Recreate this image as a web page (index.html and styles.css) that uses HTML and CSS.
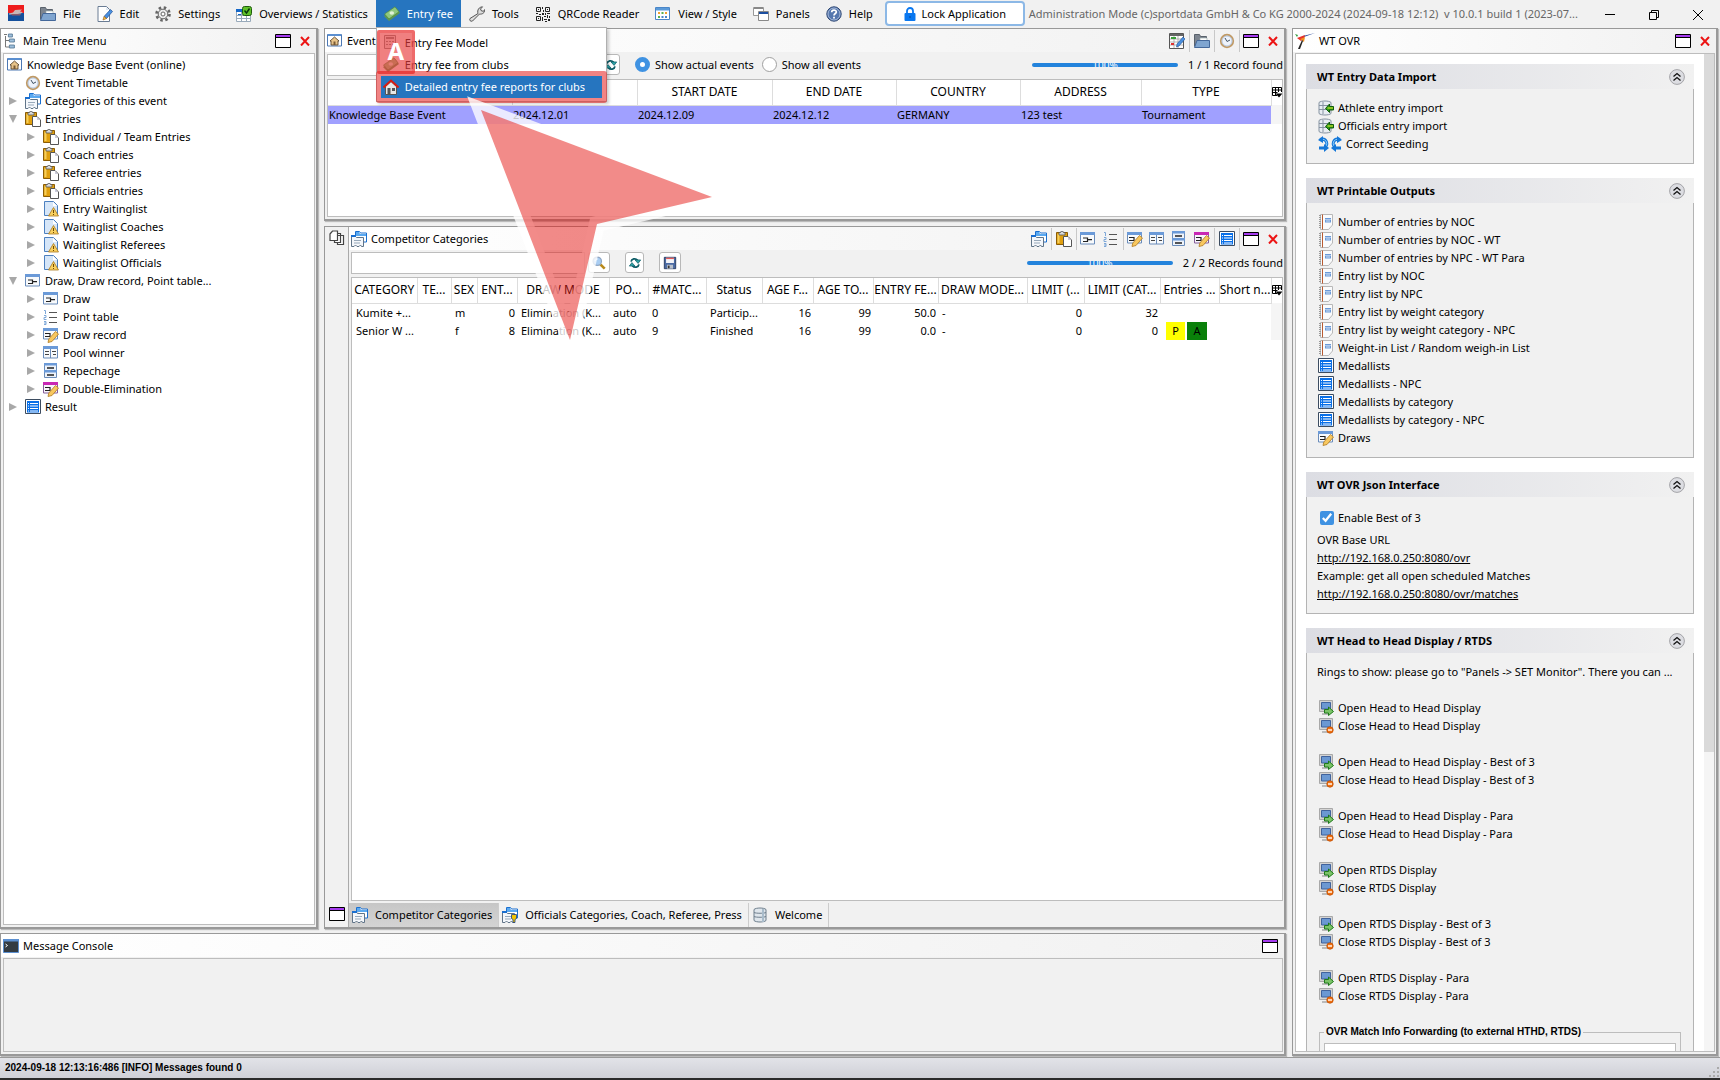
FILE: index.html
```html
<!DOCTYPE html>
<html lang="en">
<head>
  <meta charset="UTF-8">
  <meta name="viewport" content="width=device-width, initial-scale=1.0">
  <title>Sportdata</title>
  <link rel="stylesheet" href="styles.css">
</head>
<body>
  <!-- icon sprite -->
  <svg class="sprite" aria-hidden="true">
    <symbol id="logo" viewBox="0 0 16 16"><path fill="#ee1c1c" d="M0 0h16v8H0z"/><path fill="#14509c" d="M0 8h16v8H0z"/><path fill="#c9b6b6" d="M1 8.500l4-1 2-2.500 7-.5-2 2 3 .5-2 1.500-7 1H1z"/><path fill="#8b5a6a" d="M3 9h10l-1 1.500H4z"/></symbol>
    <symbol id="folder" viewBox="0 0 16 16"><path fill="#7d8590" stroke="#5a626c" d="M.5 13.500V1.500h5l1 2h6v3"/><path fill="#fff" stroke="#9aa" stroke-width=".6" d="M6 5h7v4H6z"/><path fill="#7fa5d0" stroke="#44689a" d="M3 7.500h12.500v7H.5z"/></symbol>
    <symbol id="edit" viewBox="0 0 16 16"><path fill="#fff" stroke="#6a7c94" d="M1 .5h8.500l3 3v12H1z"/><path fill="#dfe9f5" d="M9 1v3h3z"/><path fill="#4a90e0" stroke="#1c4f96" stroke-width=".7" d="M13.500 3.500l2 2-6 7-2.500-2z"/><path fill="#f7c948" stroke="#a8641a" stroke-width=".7" d="M7 10.500l2.500 2L6 14z"/></symbol>
    <symbol id="gear" viewBox="0 0 16 16"><circle cx="8" cy="8" r="6.500" fill="none" stroke="#666" stroke-width="2.600" stroke-dasharray="2.500 2.600"/><circle cx="8" cy="8" r="4.800" fill="#ececec" stroke="#666"/><circle cx="8" cy="8" r="2" fill="#fff" stroke="#666"/></symbol>
    <symbol id="overview" viewBox="0 0 16 16"><path fill="#fff" stroke="#9ab" d="M.5 3.500h14v12H.5z"/><path fill="#1668c8" d="M0 3h8v3H0zM2 8h3v1H2zM2 12h3v1H2z"/><path stroke="#9ab" fill="none" d="M.5 9.500h14M.5 12.500h14M5.500 6v9M10.500 6v9"/><rect x="6.500" y=".5" width="9" height="9" rx="2" fill="#5fc02a" stroke="#1e5c0c"/><path stroke="#06350a" fill="none" stroke-width="1.400" d="M8.500 4.500l2 2.500 3-4.500"/></symbol>
    <symbol id="money" viewBox="0 0 16 16"><path fill="#5e9a4f" d="M0 10L12 2l4 5-11 8z"/><path fill="#8fc97f" stroke="#4d8541" stroke-width=".7" d="M.5 8L11 .8l4 5L5 13z"/><ellipse cx="7.800" cy="7" rx="2.300" ry="1.800" fill="#dff2d8"/></symbol>
    <symbol id="wrench" viewBox="0 0 16 16"><path fill="#ddd" stroke="#555" d="M9 7.500C8 4 10 1 13.500.8L11.500 3l1 2 2.200.2L15.800 3.500C16 7 13 8.500 10.500 8L3.500 15c-2 1-3.500-1-2.500-2.500z"/></symbol>
    <symbol id="qr" viewBox="0 0 16 16"><path fill="none" stroke="#222" d="M1.500 1.500h4v4h-4zM10.500 1.500h4v4h-4zM1.500 10.500h4v4h-4z"/><path fill="#222" d="M3 3h1v1H3zM12 3h1v1h-1zM3 12h1v1H3zM7 1h1v2H7zM8 4h1v2H8zM1 7h2v1H1zM4 8h2v1H4zM7 7h2v2H7zM10 7h1v2h-1zM12 7h3v1h-3zM9 10h2v1H9zM12 9h1v3h-1zM14 10h1v2h-1zM7 11h1v4H7zM9 13h3v1H9zM13 13h2v2h-2zM10 15h2v1h-2z"/></symbol>
    <symbol id="view" viewBox="0 0 16 16"><path fill="#fff" stroke="#4a86c8" d="M.5 1.500h14v12H.5z"/><path fill="#5b9ad8" d="M1 2h13v2.500H1z"/><path fill="#f0a030" d="M3 6h2v2H3zM10 6h2v2h-2z"/><path fill="#58b04c" d="M6.500 6h2v2h-2zM3 10h2v2H3z"/><path fill="#4a86c8" d="M6.500 10h2v2h-2zM10 10h2v2h-2z"/></symbol>
    <symbol id="panels" viewBox="0 0 16 16"><path fill="#fff" stroke="#999" d="M.5 1.500h10v8H.5z"/><path fill="#888" d="M1 1h9v2H1z"/><path fill="#fff" stroke="#888" d="M5.500 5.500h10v9h-10z"/><path fill="#1c4fa0" d="M6 6h9v2H6z"/></symbol>
    <symbol id="help" viewBox="0 0 16 16"><circle cx="8" cy="8" r="7.200" fill="#5577ae" stroke="#2d4672"/><circle cx="8" cy="8" r="6" fill="none" stroke="#b9c8e2" stroke-width=".8"/><path fill="none" stroke="#fff" stroke-width="1.700" d="M5.700 6.300c0-3 4.800-2.800 4.600-.2C10.200 7.500 8 7.600 8 9.500"/><path fill="#fff" d="M7.100 10.700h1.800v1.800H7.100z"/></symbol>
    <symbol id="lock" viewBox="0 0 12 14"><path fill="none" stroke="#0a78f0" stroke-width="1.800" d="M3 7V4a3 3 0 0 1 6 0v3"/><rect x=".5" y="6" width="11" height="8" rx="1" fill="#0a78f0"/><path fill="#054a9c" d="M5.500 9h1v2h-1z"/></symbol>
    <symbol id="tree" viewBox="0 0 16 16"><path fill="none" stroke="#777" d="M2.500 3v11H6M2.500 7.500H6M1 1.500h3"/><path fill="#9fc0dc" stroke="#4f728f" stroke-width=".8" d="M5.400 1h4v3h-4zM6.400 6h5v3h-5zM6.400 12h5v3h-5z"/></symbol>
    <symbol id="event" viewBox="0 0 16 16"><path fill="#fff" stroke="#4c78b4" d="M.5 1.500h14v11.500H.5z"/><path fill="#5b8fd0" d="M1 1h13v2H1z"/><path fill="#e8c48a" stroke="#5a4630" stroke-width=".9" d="M3 8l4.500-4L12 8h-1v4H4V8z"/><path fill="#7a5a34" d="M6.500 8.500h2V12h-2z"/></symbol>
    <symbol id="clock" viewBox="0 0 16 16"><circle cx="8" cy="8" r="6.300" fill="#eef3fb" stroke="#c09a66" stroke-width="1.700"/><circle cx="8" cy="8" r="5" fill="none" stroke="#8fa8c8" stroke-width=".6"/><path fill="none" stroke="#456" d="M6 5l2 3.500 3-1.500"/></symbol>
    <symbol id="cats" viewBox="0 0 16 16"><path fill="#fff" stroke="#1a6fd0" d="M4.500 4V.5h4l1 1.500h6v9H13"/><path fill="#5aa9f0" d="M5 1h3l1 2h6v2H5z"/><path fill="#f4f7fb" stroke="#607488" d="M.5 15.500v-10h4l1 1h7v9h-2l-1-1.500-1.500 1.500h-2l-1.500-1.500-1.500 1.500z"/><path fill="#1a6fd0" d="M0 4h5v2H0z"/><path stroke="#9ab" d="M3 9.500h7M3 12h6"/></symbol>
    <symbol id="catstar" viewBox="0 0 16 16"><use href="#cats"/><path fill="#f2c400" stroke="#1a3c7c" stroke-width=".8" d="M9.500 7.500h5v4l-1.500 1v3h-2v-3l-1.500-1z"/></symbol>
    <symbol id="paste" viewBox="0 0 16 16"><path fill="#e0a010" stroke="#8a5c06" d="M.5 1.500h11v12H.5z"/><path fill="#f6cf5c" d="M1.500 3h2v9h-2z"/><path fill="#d8d8d8" stroke="#555" stroke-width=".8" d="M3 1.500h1.500L5 .3h2l.5 1.200H9V4H3z"/><path fill="#fff" stroke="#555" d="M7.500 5.500H12l3.500 3.500v6.500h-8z"/><path fill="#ccd" d="M12 6v3h3z"/></symbol>
    <symbol id="wait" viewBox="0 0 16 16"><path fill="#d6e6f8" stroke="#4c80c0" d="M1.500.5h9l4 4v10h-13z"/><path fill="#fff" d="M10 1v4h4z"/><path fill="#f8d060" stroke="#a87820" stroke-width=".8" d="M10.500 6.500l5 8.500h-10z"/><path fill="#704a00" d="M10 9h1v3h-1zM10 13h1v1h-1z"/></symbol>
    <symbol id="draw" viewBox="0 0 16 16"><path fill="#f8fafc" stroke="#6a8cba" d="M.5 1.500h14v11.500H.5z"/><path fill="#6b9ad8" d="M0 1h15v3H0z"/><path fill="none" stroke="#222" stroke-width="1.200" d="M3 7h4.500v3.500H3M8 8.700h4"/></symbol>
    <symbol id="points" viewBox="0 0 16 16"><path fill="none" stroke="#555" stroke-width="1.200" d="M6 3.500h8M6 8.500h8M6 13.500h8"/><path fill="none" stroke="#7fa8d8" d="M1 1.500h1.500V5M1 6.500h2v2H1v2h2.500M1 12.500h2v3H1M1 14h2"/></symbol>
    <symbol id="record" viewBox="0 0 16 16"><path fill="#f8fafc" stroke="#6a8cba" d="M.5 1.500h14v10.500H.5z"/><path fill="#6b9ad8" d="M0 1h15v3H0z"/><path fill="none" stroke="#222" stroke-width="1.200" d="M2 6.500h5v3H2"/><path fill="#f8c860" stroke="#b07a20" stroke-width=".8" d="M12.500 4.500l3 2.500-6.500 7.500-4 1 .8-3.500z"/></symbol>
    <symbol id="pool" viewBox="0 0 16 16"><path fill="#f8fafc" stroke="#6a8cba" d="M.5 1.500h14v11.500H.5zM7.500 3v10"/><path fill="#6b9ad8" d="M0 1h15v3H0z"/><path stroke="#444" d="M2 6.500h4M2 9.500h4M9 6.500h4M10 9.500h3"/></symbol>
    <symbol id="rep" viewBox="0 0 16 16"><path fill="#eef3fa" stroke="#6a8cba" d="M1.500.5h12v14h-12z"/><path fill="#6b9ad8" d="M1 0h13v2.500H1zM1 7h13v2.500H1z"/><path stroke="#222" stroke-width="1.500" d="M4 5h7M4 12h7"/></symbol>
    <symbol id="double" viewBox="0 0 16 16"><path fill="#f8f4fb" stroke="#86609c" d="M.5 1.500h14v10.500H.5z"/><path fill="#c828b4" d="M0 1h15v3H0z"/><path fill="none" stroke="#222" stroke-width="1.200" d="M2 6.500h5v3H2"/><path fill="#f8c860" stroke="#b07a20" stroke-width=".8" d="M12.500 4.500l3 2.500-6.500 7.500-4 1 .8-3.500z"/></symbol>
    <symbol id="list" viewBox="0 0 16 16"><path fill="#fff" stroke="#3c4c60" d="M.5.5h15v14H.5z"/><path fill="#0a70e8" d="M2 2h12v11.500H2z"/><path stroke="#fff" d="M5 4.500h8M5 7h8M5 9.500h8M5 12h8M3 4.500h1M3 7h1M3 9.500h1M3 12h1"/></symbol>
    <symbol id="window" viewBox="0 0 16 14"><path fill="#fff" stroke="#000" d="M.5.5h15v13H.5z"/><path fill="#a63cf0" d="M1 1h14v2H1z"/><path stroke="#000" d="M1 3.500h14"/></symbol>
    <symbol id="close" viewBox="0 0 10 10"><path fill="none" stroke="#ec1414" stroke-width="2" d="M1 1l8 8.500M9 1L1 9.500"/></symbol>
    <symbol id="planner" viewBox="0 0 16 16"><path fill="#fff" stroke="#555" d="M.5.5h14v15H.5z"/><path fill="#666" d="M1 1h13v2H1z"/><path stroke="#999" stroke-width=".7" fill="none" d="M1 6h13M1 9h13M1 12h13M5 3v12M9 3v12"/><path fill="#3aa03a" d="M2 4h5v2H2z"/><path fill="#e03030" d="M2 10h3v2H2z"/><path fill="#4a90e0" stroke="#1c4f96" stroke-width=".6" d="M14 4l2 2-6 7-2.500 1 .5-3z"/></symbol>
    <symbol id="refresh" viewBox="0 0 16 16"><path fill="none" stroke="#0d5c66" stroke-width="2" d="M3.500 6.500C4 3 8.500 2 11 5M12.500 9.500C12 13 7.500 14 5 11"/><path fill="#2fa4a8" stroke="#0d5c66" stroke-width=".8" d="M14.500 4.500l-3 4-3.500-4zM1.500 11.500l3-4 3.500 4z"/></symbol>
    <symbol id="search" viewBox="0 0 16 16"><path stroke="#b98a1c" stroke-width="3" d="M9.500 9.500l5 5"/><circle cx="6" cy="6" r="4.800" fill="#a9cdf2" stroke="#8fa6c4" stroke-width="1.400"/><path fill="none" stroke="#fff" d="M3.500 5.500C4 4 5 3.500 6.500 3.500"/></symbol>
    <symbol id="save" viewBox="0 0 16 16"><path fill="#4a6aa4" stroke="#22365c" d="M1.500 1.500h13v13h-13z"/><path fill="#f4f4f8" d="M3.500 2h9v6h-9z"/><path fill="#e05a5a" d="M3.500 2h9v1.500h-9z"/><path fill="#b8c0cc" d="M4.500 10h7v4.500h-7z"/><path fill="#333" d="M5.500 11h2v3h-2z"/></symbol>
    <symbol id="columns" viewBox="0 0 11 11"><path fill="none" stroke="#000" d="M5 8.500H.5v-8h9V5M.5 3h9M.5 5.500h5M3.500.5v8M6.500.5V5"/><path d="M3.500 6.500h7L7 10.500z"/></symbol>
    <symbol id="import" viewBox="0 0 16 16"><path fill="#e8edf2" stroke="#8592a0" d="M1 2.500C3 .5 11 .5 13 2.500v11c-2 2-10 2-12 0z"/><path fill="none" stroke="#8592a0" d="M1 5.500h9M1 9.500h9M5 2v12"/><path fill="#2f9a18" stroke="#0f5c0a" d="M15.500 6.500h-4V4L7.500 8.500l4 4v-2.500h4z"/><path stroke="#e8ee30" d="M9.500 8h5.500"/></symbol>
    <symbol id="seeding" viewBox="0 0 24 16"><path fill="none" stroke="#1577d8" stroke-width="3" d="M2 3.500c7-2 9 6 4 8.500H1M22 3.500c-7-2-9 6-4 8.500h5"/><path fill="none" stroke="#8ed0ff" d="M2 3.500c7-2 9 6 4 8.500M22 3.500c-7-2-9 6-4 8.500"/><path fill="#1577d8" d="M0 4L5 0v7zM24 4l-5-4v7zM6 8v8l5-4zM18 8v8l-5-4z"/></symbol>
    <symbol id="note" viewBox="0 0 16 16"><path fill="#fafbfc" stroke="#b8b8b8" d="M2.500.5h12v10.500l-4 4.500h-8z"/><path stroke="#b85a30" d="M4.500.5v15"/><path stroke="#999" stroke-dasharray="1 1" stroke-width="2" d="M2 1v14"/><path fill="#6b9ad8" d="M7 4h6v1H7zM7 5.500h6v3H7z"/><path fill="#cfe0f4" d="M8 6.500h4v1H8z"/></symbol>
    <symbol id="monopen" viewBox="0 0 16 16"><path fill="#d4d4d4" stroke="#a8a8a8" d="M1.500.5h13v11h-13z"/><path fill="#6b98d2" stroke="#41639c" d="M3.500 2.500h9v6.500h-9z"/><path fill="#bbb" d="M4 13h6v2H4z"/><path fill="#7cc468" stroke="#1e7a1a" d="M6.500 9.500h4v-2.500l5 4.500-5 4V13h-4z"/></symbol>
    <symbol id="monclose" viewBox="0 0 16 16"><path fill="#d4d4d4" stroke="#a8a8a8" d="M1.500.5h13v11h-13z"/><path fill="#6b98d2" stroke="#41639c" d="M3.500 2.500h9v6.500h-9z"/><path fill="#bbb" d="M4 13h6v2H4z"/><circle cx="12" cy="12" r="3.200" fill="#f07010" stroke="#c04c00" stroke-width=".8"/><path fill="#fff" d="M10 11.300h4v1.400h-4z"/></symbol>
    <symbol id="wt" viewBox="0 0 20 16"><path fill="#2a4a9c" d="M20 0L8 3 6 5z"/><path fill="#e8302a" d="M2 5l8-3-1 3-3 3z"/><path fill="#f09020" d="M5 6l5-2-1 5z"/><path fill="#2f9a3c" d="M0 1l3 1-1 2z"/><path fill="#222" d="M8 8l-3 8-2 0 4-9z"/></symbol>
    <symbol id="console" viewBox="0 0 16 14"><path fill="#333b42" stroke="#5b8fd0" d="M.5.5h15v13H.5z"/><path fill="#5b8fd0" d="M0 0h16v2.500H0z"/><path fill="none" stroke="#fff" d="M2.500 5l2 1.500-2 1.500"/></symbol>
    <symbol id="pages" viewBox="0 0 16 16"><path fill="#fff" stroke="#444" stroke-width="1.200" d="M9 5.500h5.500v9H8.500V13M6 3.500h5.500v9H5.500V11"/><path fill="#fff" stroke="#444" stroke-width="1.200" d="M1 4l2.500-3h5v9.500H1z"/></symbol>
    <symbol id="db" viewBox="0 0 16 16"><path fill="#dfe6ec" stroke="#6e7e8c" d="M2 2.500C4 .5 12 .5 14 2.500v11c-2 2-10 2-12 0z"/><path fill="none" stroke="#6e7e8c" d="M2 5.500c2 1 10 1 12 0M2 9.500c2 1 10 1 12 0"/><path fill="#a9bccb" d="M10 2h2v13h-2z"/></symbol>
    <symbol id="calc" viewBox="0 0 16 16"><path fill="#eee" stroke="#888" d="M1.500.5h11v13h-11z"/><path fill="#888" d="M3 2h8v2H3zM3 6h2v1H3zM6 6h2v1H6zM9 6h2v1H9zM3 9h2v1H3zM6 9h2v1H6zM9 9h2v1H9z"/></symbol>
    <symbol id="house" viewBox="0 0 16 16"><path fill="#e8e8e8" stroke="#555" d="M2.500 7.500L8 2.500l5.500 5v8h-11z"/><path fill="#555" d="M4.500 9h3v6h-3zM9 9h3v3H9z"/><path fill="none" stroke="#d81c10" stroke-width="2" d="M.5 8.500L8 1.500l7.500 7"/></symbol>
    <symbol id="chevrons" viewBox="0 0 16 16"><circle cx="8" cy="8" r="7.400" fill="#dcdde2" stroke="#a4a4a8"/><path fill="none" stroke="#111" stroke-width="1.300" d="M4.500 7.500L8 4.500l3.500 3M4.500 11.500L8 8.500l3.500 3"/></symbol>
    <symbol id="right" viewBox="0 0 8 8"><path fill="#a8a8a8" d="M0 0l8 4-8 4z"/></symbol>
    <symbol id="down" viewBox="0 0 8 8"><path fill="#a8a8a8" d="M0 0h8L4 8z"/></symbol>
  </svg>

  <header class="menubar">
    <svg class="icon app-logo"><use href="#logo"/></svg>
    <nav class="menu">
      <button class="menu-item"><svg class="icon"><use href="#folder"/></svg>File</button>
      <button class="menu-item"><svg class="icon"><use href="#edit"/></svg>Edit</button>
      <button class="menu-item"><svg class="icon"><use href="#gear"/></svg>Settings</button>
      <button class="menu-item"><svg class="icon"><use href="#overview"/></svg>Overviews / Statistics</button>
      <div class="menu-open">
        <button class="menu-item active"><svg class="icon"><use href="#money"/></svg>Entry fee</button>
        <div class="dropdown">
          <button class="drop-item"><svg class="icon"><use href="#calc"/></svg>Entry Fee Model</button>
          <button class="drop-item"><svg class="icon"><use href="#money"/></svg>Entry fee from clubs</button>
          <button class="drop-item selected"><svg class="icon"><use href="#house"/></svg>Detailed entry fee reports for clubs</button>
          <div class="mark-letter">A</div>
          <div class="mark-frame"></div>
          <svg class="mark-arrow" viewBox="0 0 260 270"><path d="M13 19L244 106 129 133 102 249z"/></svg>
        </div>
      </div>
      <button class="menu-item"><svg class="icon"><use href="#wrench"/></svg>Tools</button>
      <button class="menu-item"><svg class="icon"><use href="#qr"/></svg>QRCode Reader</button>
      <button class="menu-item"><svg class="icon"><use href="#view"/></svg>View / Style</button>
      <button class="menu-item"><svg class="icon"><use href="#panels"/></svg>Panels</button>
      <button class="menu-item"><svg class="icon"><use href="#help"/></svg>Help</button>
    </nav>
    <button class="lock-btn"><svg class="icon-lock"><use href="#lock"/></svg>Lock Application</button>
    <span class="app-title">Administration Mode (c)sportdata GmbH &amp; Co KG 2000-2024 (2024-09-18 12:12)&nbsp; v 10.0.1 build 1 (2023-07...</span>
    <div class="window-controls">
      <button aria-label="Minimize"><svg viewBox="0 0 12 12"><path d="M1 5.500h10"/></svg></button>
      <button aria-label="Restore"><svg viewBox="0 0 12 12"><path d="M1.500 3.500h7v7h-7zM3.500 3.500v-2h7v7h-2"/></svg></button>
      <button aria-label="Close"><svg viewBox="0 0 12 12"><path d="M1 1l10 10M11 1L1 11"/></svg></button>
    </div>
  </header>

  <main class="workspace">
    <section class="panel tree-panel">
      <div class="panel-header">
        <svg class="icon"><use href="#tree"/></svg><h2>Main Tree Menu</h2>
        <div class="tools">
          <button aria-label="Maximize"><svg class="icon-window"><use href="#window"/></svg></button>
          <button aria-label="Close"><svg class="icon-close"><use href="#close"/></svg></button>
        </div>
      </div>
      <div class="panel-box">
        <ul class="tree">
          <li class="root"><svg class="icon"><use href="#event"/></svg>Knowledge Base Event (online)</li>
          <li><i class="arrow"></i><svg class="icon"><use href="#clock"/></svg>Event Timetable</li>
          <li><svg class="arrow"><use href="#right"/></svg><svg class="icon"><use href="#cats"/></svg>Categories of this event</li>
          <li><svg class="arrow"><use href="#down"/></svg><svg class="icon"><use href="#paste"/></svg>Entries</li>
          <li class="sub"><svg class="arrow"><use href="#right"/></svg><svg class="icon"><use href="#paste"/></svg>Individual / Team Entries</li>
          <li class="sub"><svg class="arrow"><use href="#right"/></svg><svg class="icon"><use href="#paste"/></svg>Coach entries</li>
          <li class="sub"><svg class="arrow"><use href="#right"/></svg><svg class="icon"><use href="#paste"/></svg>Referee entries</li>
          <li class="sub"><svg class="arrow"><use href="#right"/></svg><svg class="icon"><use href="#paste"/></svg>Officials entries</li>
          <li class="sub"><svg class="arrow"><use href="#right"/></svg><svg class="icon"><use href="#wait"/></svg>Entry Waitinglist</li>
          <li class="sub"><svg class="arrow"><use href="#right"/></svg><svg class="icon"><use href="#wait"/></svg>Waitinglist Coaches</li>
          <li class="sub"><svg class="arrow"><use href="#right"/></svg><svg class="icon"><use href="#wait"/></svg>Waitinglist Referees</li>
          <li class="sub"><svg class="arrow"><use href="#right"/></svg><svg class="icon"><use href="#wait"/></svg>Waitinglist Officials</li>
          <li><svg class="arrow"><use href="#down"/></svg><svg class="icon"><use href="#draw"/></svg>Draw, Draw record, Point table...</li>
          <li class="sub"><svg class="arrow"><use href="#right"/></svg><svg class="icon"><use href="#draw"/></svg>Draw</li>
          <li class="sub"><svg class="arrow"><use href="#right"/></svg><svg class="icon"><use href="#points"/></svg>Point table</li>
          <li class="sub"><svg class="arrow"><use href="#right"/></svg><svg class="icon"><use href="#record"/></svg>Draw record</li>
          <li class="sub"><svg class="arrow"><use href="#right"/></svg><svg class="icon"><use href="#pool"/></svg>Pool winner</li>
          <li class="sub"><svg class="arrow"><use href="#right"/></svg><svg class="icon"><use href="#rep"/></svg>Repechage</li>
          <li class="sub"><svg class="arrow"><use href="#right"/></svg><svg class="icon"><use href="#double"/></svg>Double-Elimination</li>
          <li><svg class="arrow"><use href="#right"/></svg><svg class="icon"><use href="#list"/></svg>Result</li>
        </ul>
      </div>
    </section>

    <div class="center">
      <section class="panel event-panel">
        <div class="panel-header">
          <svg class="icon"><use href="#event"/></svg><h2>Event</h2>
          <div class="tools">
            <button class="sep" aria-label="Planner"><svg class="icon"><use href="#planner"/></svg></button>
            <button class="sep" aria-label="Open"><svg class="icon"><use href="#folder"/></svg></button>
            <button class="sep" aria-label="Timetable"><svg class="icon"><use href="#clock"/></svg></button>
            <button aria-label="Maximize"><svg class="icon-window"><use href="#window"/></svg></button>
            <button aria-label="Close"><svg class="icon-close"><use href="#close"/></svg></button>
          </div>
        </div>
        <div class="toolbar">
          <input type="text" class="search" aria-label="Search events">
          <button class="tool-btn" aria-label="Search"><svg class="icon"><use href="#search"/></svg></button>
          <button class="tool-btn narrow" aria-label="Refresh"><svg class="icon"><use href="#refresh"/></svg></button>
          <div class="radios">
            <label><input type="radio" name="events" checked>Show actual events</label>
            <label><input type="radio" name="events">Show all events</label>
          </div>
          <div class="progress" role="progressbar" aria-label="Loaded">100%</div>
          <span class="count">1 / 1 Record found</span>
        </div>
        <div class="panel-box">
          <table class="grid">
            <colgroup><col style="width:184px"><col style="width:125px"><col style="width:135px"><col style="width:124px"><col style="width:124px"><col style="width:121px"><col><col style="width:11px"></colgroup>
            <thead>
              <tr><th></th><th></th><th>START DATE</th><th>END DATE</th><th>COUNTRY</th><th>ADDRESS</th><th>TYPE</th><th class="picker"><svg class="icon-columns"><use href="#columns"/></svg></th></tr>
            </thead>
            <tbody>
              <tr class="selected-row"><td class="flush">Knowledge Base Event</td><td class="flush">2024.12.01</td><td class="flush">2024.12.09</td><td class="flush">2024.12.12</td><td class="flush">GERMANY</td><td class="flush">123 test</td><td class="flush">Tournament</td><td class="picker"></td></tr>
            </tbody>
          </table>
        </div>
      </section>

      <section class="panel category-panel">
        <div class="side-strip">
          <svg class="icon"><use href="#pages"/></svg>
          <svg class="icon-window"><use href="#window"/></svg>
        </div>
        <div class="category-main">
          <div class="panel-header">
            <svg class="icon"><use href="#cats"/></svg><h2>Competitor Categories</h2>
            <div class="tools">
              <button class="sep" aria-label="Categories"><svg class="icon"><use href="#cats"/></svg></button>
              <button class="sep" aria-label="Entries"><svg class="icon"><use href="#paste"/></svg></button>
              <button aria-label="Draw"><svg class="icon"><use href="#draw"/></svg></button>
              <button class="sep" aria-label="Point table"><svg class="icon"><use href="#points"/></svg></button>
              <button aria-label="Draw record"><svg class="icon"><use href="#record"/></svg></button>
              <button aria-label="Pool winner"><svg class="icon"><use href="#pool"/></svg></button>
              <button aria-label="Repechage"><svg class="icon"><use href="#rep"/></svg></button>
              <button class="sep" aria-label="Double-Elimination"><svg class="icon"><use href="#double"/></svg></button>
              <button class="sep" aria-label="Result"><svg class="icon"><use href="#list"/></svg></button>
              <button aria-label="Maximize"><svg class="icon-window"><use href="#window"/></svg></button>
              <button aria-label="Close"><svg class="icon-close"><use href="#close"/></svg></button>
            </div>
          </div>
          <div class="toolbar">
            <input type="text" class="search" aria-label="Search categories">
            <button class="tool-btn" aria-label="Search"><svg class="icon"><use href="#search"/></svg></button>
            <button class="tool-btn narrow" aria-label="Refresh"><svg class="icon"><use href="#refresh"/></svg></button>
            <button class="tool-btn" aria-label="Save"><svg class="icon"><use href="#save"/></svg></button>
            <div class="progress" role="progressbar" aria-label="Loaded">100%</div>
            <span class="count">2 / 2 Records found</span>
          </div>
          <div class="panel-box">
            <table class="grid">
              <colgroup><col style="width:65px"><col style="width:34px"><col style="width:26px"><col style="width:40px"><col style="width:92px"><col style="width:39px"><col style="width:58px"><col style="width:56px"><col style="width:51px"><col style="width:60px"><col style="width:65px"><col style="width:89px"><col style="width:57px"><col style="width:76px"><col style="width:59px"><col><col style="width:11px"></colgroup>
              <thead>
                <tr><th>CATEGORY</th><th>TE...</th><th>SEX</th><th>ENT...</th><th>DRAW MODE</th><th>PO...</th><th>#MATC...</th><th>Status</th><th>AGE F...</th><th>AGE TO...</th><th>ENTRY FE...</th><th>DRAW MODE...</th><th>LIMIT (...</th><th>LIMIT (CAT...</th><th>Entries ...</th><th>Short n...</th><th class="picker"><svg class="icon-columns"><use href="#columns"/></svg></th></tr>
              </thead>
              <tbody>
                <tr><td>Kumite +...</td><td></td><td>m</td><td class="num">0</td><td>Elimination (K...</td><td>auto</td><td>0</td><td>Particip...</td><td class="num">16</td><td class="num">99</td><td class="num">50.0</td><td>-</td><td class="num">0</td><td class="num">32</td><td></td><td></td><td class="picker"></td></tr>
                <tr><td>Senior W ...</td><td></td><td>f</td><td class="num">8</td><td>Elimination (K...</td><td>auto</td><td>9</td><td>Finished</td><td class="num">16</td><td class="num">99</td><td class="num">0.0</td><td>-</td><td class="num">0</td><td class="num">0</td><td><div class="badges"><span class="badge-p">P</span><span class="badge-a">A</span></div></td><td></td><td class="picker"></td></tr>
              </tbody>
            </table>
          </div>
          <div class="tabs">
            <button class="tab current"><svg class="icon"><use href="#cats"/></svg>Competitor Categories</button>
            <button class="tab"><svg class="icon"><use href="#catstar"/></svg>Officials Categories, Coach, Referee, Press</button>
            <button class="tab"><svg class="icon"><use href="#db"/></svg>Welcome</button>
          </div>
        </div>
      </section>
    </div>

    <section class="panel console-panel">
      <div class="panel-header">
        <svg class="icon-window"><use href="#console"/></svg><h2>Message Console</h2>
        <div class="tools">
          <button aria-label="Maximize"><svg class="icon-window"><use href="#window"/></svg></button>
        </div>
      </div>
      <div class="panel-box gray"></div>
    </section>

    <section class="panel ovr-panel">
      <div class="panel-header">
        <svg class="icon-wt"><use href="#wt"/></svg><h2>WT OVR</h2>
        <div class="tools">
          <button aria-label="Maximize"><svg class="icon-window"><use href="#window"/></svg></button>
          <button aria-label="Close"><svg class="icon-close"><use href="#close"/></svg></button>
        </div>
      </div>
      <div class="panel-box ovr-box">
        <div class="ovr-scroll">
          <div class="group">
            <h3>WT Entry Data Import<svg class="icon"><use href="#chevrons"/></svg></h3>
            <ul>
              <li><svg class="icon"><use href="#import"/></svg>Athlete entry import</li>
              <li><svg class="icon"><use href="#import"/></svg>Officials entry import</li>
              <li><svg class="icon-wide"><use href="#seeding"/></svg>Correct Seeding</li>
            </ul>
          </div>
          <div class="group">
            <h3>WT Printable Outputs<svg class="icon"><use href="#chevrons"/></svg></h3>
            <ul>
              <li><svg class="icon"><use href="#note"/></svg>Number of entries by NOC</li>
              <li><svg class="icon"><use href="#note"/></svg>Number of entries by NOC - WT</li>
              <li><svg class="icon"><use href="#note"/></svg>Number of entries by NPC - WT Para</li>
              <li><svg class="icon"><use href="#note"/></svg>Entry list by NOC</li>
              <li><svg class="icon"><use href="#note"/></svg>Entry list by NPC</li>
              <li><svg class="icon"><use href="#note"/></svg>Entry list by weight category</li>
              <li><svg class="icon"><use href="#note"/></svg>Entry list by weight category - NPC</li>
              <li><svg class="icon"><use href="#note"/></svg>Weight-in List / Random weigh-in List</li>
              <li><svg class="icon"><use href="#list"/></svg>Medallists</li>
              <li><svg class="icon"><use href="#list"/></svg>Medallists - NPC</li>
              <li><svg class="icon"><use href="#list"/></svg>Medallists by category</li>
              <li><svg class="icon"><use href="#list"/></svg>Medallists by category - NPC</li>
              <li><svg class="icon"><use href="#record"/></svg>Draws</li>
            </ul>
          </div>
          <div class="group">
            <h3>WT OVR Json Interface<svg class="icon"><use href="#chevrons"/></svg></h3>
            <div class="group-body">
              <label class="check"><input type="checkbox" checked>Enable Best of 3</label>
              <p>OVR Base URL</p>
              <p><a href="#ovr">http://192.168.0.250:8080/ovr</a></p>
              <p>Example: get all open scheduled Matches</p>
              <p><a href="#matches">http://192.168.0.250:8080/ovr/matches</a></p>
            </div>
          </div>
          <div class="group">
            <h3>WT Head to Head Display / RTDS<svg class="icon"><use href="#chevrons"/></svg></h3>
            <div class="group-body">
              <p>Rings to show: please go to "Panels -&gt; SET Monitor". There you can ...</p>
            </div>
            <ul>
              <li><svg class="icon"><use href="#monopen"/></svg>Open Head to Head Display</li>
              <li class="last"><svg class="icon"><use href="#monclose"/></svg>Close Head to Head Display</li>
              <li><svg class="icon"><use href="#monopen"/></svg>Open Head to Head Display - Best of 3</li>
              <li class="last"><svg class="icon"><use href="#monclose"/></svg>Close Head to Head Display - Best of 3</li>
              <li><svg class="icon"><use href="#monopen"/></svg>Open Head to Head Display - Para</li>
              <li class="last"><svg class="icon"><use href="#monclose"/></svg>Close Head to Head Display - Para</li>
              <li><svg class="icon"><use href="#monopen"/></svg>Open RTDS Display</li>
              <li class="last"><svg class="icon"><use href="#monclose"/></svg>Close RTDS Display</li>
              <li><svg class="icon"><use href="#monopen"/></svg>Open RTDS Display - Best of 3</li>
              <li class="last"><svg class="icon"><use href="#monclose"/></svg>Close RTDS Display - Best of 3</li>
              <li><svg class="icon"><use href="#monopen"/></svg>Open RTDS Display - Para</li>
              <li class="last"><svg class="icon"><use href="#monclose"/></svg>Close RTDS Display - Para</li>
            </ul>
            <fieldset>
              <legend>OVR Match Info Forwarding (to external HTHD, RTDS)</legend>
              <input type="text" aria-label="Forwarding address">
            </fieldset>
          </div>
        </div>
        <div class="scrollbar"><div class="thumb"></div></div>
      </div>
    </section>
  </main>

  <footer class="statusbar">2024-09-18 12:13:16:486 [INFO] Messages found 0<svg class="grip" viewBox="0 0 12 12"><path d="M9 1h2v2H9zM9 5h2v2H9zM5 5h2v2H5zM9 9h2v2H9zM5 9h2v2H5zM1 9h2v2H1z"/></svg></footer>
</body>
</html>
```

FILE: styles.css
```css
* {
  box-sizing: border-box;
}

body {
  margin: 0;
  height: 100vh;
  display: flex;
  flex-direction: column;
  overflow: hidden;
  background-color: #f1f1f1;
  border-bottom: 2px solid #2b2b2b;
  font-family: "Noto Sans", "Open Sans", sans-serif;
  font-size: 11px;
  line-height: 18px;
  color: #000;
}

button,
input {
  font: inherit;
  color: inherit;
}

button {
  border: none;
  background: none;
  padding: 0;
}

h2,
h3,
p,
ul {
  margin: 0;
  padding: 0;
  font-size: 11px;
  font-weight: normal;
  list-style: none;
}

.sprite {
  display: none;
}

.icon {
  width: 16px;
  height: 16px;
  flex: none;
}

.icon-window {
  width: 16px;
  height: 14px;
  flex: none;
}

.icon-close {
  width: 10px;
  height: 10px;
}

.icon-wide {
  width: 24px;
  height: 16px;
  flex: none;
}

.icon-wt {
  width: 20px;
  height: 16px;
  flex: none;
}

/* menu bar */
.menubar {
  display: flex;
  align-items: flex-start;
  height: 28px;
  flex: none;
}

.app-logo {
  margin: 5px 8px 0;
}

.menu {
  display: flex;
}

.menu-item {
  display: flex;
  align-items: center;
  gap: 7px;
  height: 27px;
  padding: 0 8px;
  white-space: nowrap;
}

.menu-item.active {
  background-color: #2675bf;
  color: #fff;
}

.menu-open {
  position: relative;
}

.dropdown {
  position: absolute;
  z-index: 5;
  top: 27px;
  left: 0;
  width: 231px;
  padding: 4px 4px 3px;
  background-color: #fff;
  border: 1px solid #b0b0b0;
  box-shadow: 2px 2px 3px rgba(0, 0, 0, 0.2);
}

.drop-item {
  display: flex;
  align-items: center;
  gap: 6px;
  width: 100%;
  height: 22px;
  padding: 0 2px;
  white-space: nowrap;
}

.drop-item.selected {
  background-color: #2675bf;
  color: #fff;
}

.mark-letter {
  position: absolute;
  top: 2px;
  left: 0;
  width: 38px;
  height: 44px;
  background-color: rgba(232, 60, 60, 0.65);
  border: 3px solid rgba(236, 80, 80, 0.45);
  border-radius: 2px;
  color: #fff;
  font-size: 24px;
  font-weight: bold;
  line-height: 36px;
  text-align: center;
}

.mark-frame {
  position: absolute;
  top: 43px;
  left: -1px;
  width: 231px;
  height: 32px;
  border: 5px solid rgba(229, 30, 30, 0.55);
  border-radius: 3px;
}

.mark-arrow {
  position: absolute;
  top: 63px;
  left: 91px;
  width: 260px;
  height: 270px;
  overflow: visible;
  pointer-events: none;
  fill: rgba(229, 23, 20, 0.5);
  stroke: rgba(255, 255, 255, 0.78);
  stroke-width: 16px;
  stroke-miterlimit: 8;
  paint-order: stroke;
}

.lock-btn {
  display: flex;
  align-items: center;
  justify-content: center;
  gap: 6px;
  width: 140px;
  height: 25px;
  margin: 1px 4px 0;
  background-color: #fff;
  border: 2px solid #8cb8e6;
  border-radius: 4px;
  white-space: nowrap;
  flex: none;
}

.icon-lock {
  width: 12px;
  height: 14px;
}

.app-title {
  flex: 1;
  min-width: 0;
  line-height: 27px;
  color: #666;
  white-space: nowrap;
}

.window-controls {
  display: flex;
  flex: none;
}

.window-controls button {
  width: 44px;
  height: 27px;
}

.window-controls svg {
  width: 12px;
  height: 12px;
  vertical-align: middle;
  fill: none;
  stroke: #000;
}

/* workspace */
.workspace {
  flex: 1;
  min-height: 0;
  display: grid;
  grid-template-columns: 318px 1fr 426px;
  grid-template-rows: 1fr 123px;
  gap: 4px 6px;
  padding-right: 2px;
}

.panel {
  display: flex;
  flex-direction: column;
  min-width: 0;
  min-height: 0;
  padding: 0 1px 2px 2px;
  border: 1px solid #999;
  border-right-width: 2px;
  border-bottom-width: 2px;
  box-shadow: 1px 1px 1px #bbb;
}

.panel-header {
  display: flex;
  align-items: center;
  gap: 4px;
  height: 23px;
  margin: 0 -1px 0 -2px;
  padding-left: 2px;
  background: linear-gradient(90deg, #fff, #f1f1f1);
  flex: none;
}

.panel-header h2 {
  flex: 1;
  line-height: 23px;
  white-space: nowrap;
}

.tools {
  display: flex;
  height: 22px;
}

.tools button {
  display: flex;
  align-items: center;
  justify-content: center;
  min-width: 22px;
}

.tools .sep {
  min-width: 25px;
  border-right: 1px solid #c8c8c8;
}

.panel-box {
  flex: 1;
  min-height: 0;
  overflow: hidden;
  margin-top: 1px;
  background-color: #fff;
  border: 1px solid #bdbdbd;
}

.panel-box.gray {
  background-color: #f1f1f1;
}

.console-panel .tools {
  padding-right: 3px;
}

/* tree */
.tree {
  padding: 2px 0 0 5px;
}

.tree li {
  display: flex;
  align-items: center;
  height: 18px;
  white-space: nowrap;
}

.tree .icon {
  margin-right: 4px;
}

.tree .root {
  margin-left: -2px;
}

.tree .sub {
  padding-left: 18px;
}

.tree .arrow {
  width: 8px;
  height: 8px;
  margin-right: 8px;
}

/* center column */
.center {
  display: flex;
  flex-direction: column;
  gap: 5px;
  min-width: 0;
  min-height: 0;
}

.event-panel {
  height: 193px;
  flex: none;
}

.toolbar {
  display: flex;
  align-items: center;
  height: 27px;
  padding-bottom: 2px;
  flex: none;
}

.toolbar + .panel-box {
  margin-top: 0;
}

.search {
  width: 234px;
  height: 22px;
  margin-right: 3px;
  border: 1px solid #bdbdbd;
  background-color: #fff;
}

.tool-btn {
  display: flex;
  align-items: center;
  justify-content: center;
  width: 22px;
  height: 21px;
  margin-right: 15px;
  background-color: #fff;
  border: 1px solid #b8b8b8;
  border-radius: 3px;
}

.tool-btn.narrow {
  width: 19px;
}

.tool-btn .icon {
  width: 14px;
}

.radios {
  display: flex;
  gap: 8px;
}

.radios label {
  display: flex;
  align-items: center;
  gap: 5px;
  white-space: nowrap;
}

.radios input {
  appearance: none;
  width: 15px;
  height: 15px;
  margin: 0;
  background-color: #fff;
  border: 1px solid #a0a0a0;
  border-radius: 50%;
}

.radios input:checked {
  border: 5px solid #3f92e2;
}

.progress {
  width: 146px;
  height: 4px;
  margin-left: auto;
  overflow: hidden;
  background-color: #2383dc;
  border-radius: 2px;
  color: #fff;
  font-size: 10px;
  line-height: 4px;
  text-align: center;
}

.count {
  margin-left: 10px;
  white-space: nowrap;
}

/* tables */
.grid {
  width: 100%;
  table-layout: fixed;
  border-collapse: collapse;
}

.grid th {
  height: 25px;
  padding: 0;
  border-right: 1px solid #ddd;
  border-bottom: 1px solid #ddd;
  font-size: 12px;
  font-weight: normal;
  white-space: nowrap;
}

.grid td {
  height: 18px;
  padding: 0 2px 0 4px;
  line-height: 18px;
  white-space: nowrap;
}

.grid td.flush {
  padding-left: 1px;
}

.grid .num {
  padding: 0 2px 0 0;
  text-align: right;
}

.grid th.picker {
  border: none;
}

.grid td.picker {
  background-color: #f5f5f5;
}

.icon-columns {
  display: block;
  width: 11px;
  height: 11px;
}

.selected-row {
  background-color: #a0a0ff;
}

.badges {
  display: flex;
  gap: 2px;
  padding-left: 2px;
  text-align: center;
}

.badge-p {
  width: 19px;
  background-color: #ff0;
}

.badge-a {
  width: 20px;
  background-color: #0a800a;
}

/* competitor categories */
.category-panel {
  flex: 1;
  flex-direction: row;
  padding: 0 1px 0 0;
}

.side-strip {
  display: flex;
  flex-direction: column;
  justify-content: space-between;
  align-items: center;
  width: 24px;
  padding: 3px 0 6px;
  border-right: 1px solid #aaa;
  flex: none;
}

.category-main {
  display: flex;
  flex-direction: column;
  flex: 1;
  min-width: 0;
  padding-left: 2px;
}

.tabs {
  display: flex;
  height: 24px;
  margin: 2px 0 0 -2px;
  flex: none;
}

.tab {
  display: flex;
  align-items: center;
  gap: 7px;
  padding: 0 6px 0 3px;
  border-right: 1px solid #ccc;
  white-space: nowrap;
}

.tab.current {
  background: linear-gradient(#c6c6c6, #d4d4d4);
}

.console-panel {
  grid-column: 1 / 3;
}

/* WT OVR */
.ovr-panel {
  grid-column: 3;
  grid-row: 1 / 3;
}

.ovr-box {
  display: flex;
}

.ovr-scroll {
  flex: 1;
  display: flex;
  flex-direction: column;
  gap: 14px;
  padding: 10px;
  overflow: hidden;
}

.scrollbar {
  width: 10px;
  background-color: #f5f5f5;
}

.thumb {
  height: 70%;
  background-color: #dadada;
}

.group {
  flex: none;
  padding-bottom: 10px;
  background-color: #f1f1f1;
  border: 1px solid #b4b4b4;
  border-top: none;
}

.group h3 {
  display: flex;
  align-items: center;
  justify-content: space-between;
  height: 25px;
  margin: 0 -1px 10px;
  padding: 0 9px 0 11px;
  background: linear-gradient(90deg, #dcdde3, #f1f1f1);
  font-weight: bold;
}

.group li {
  display: flex;
  align-items: center;
  gap: 4px;
  height: 18px;
  padding-left: 11px;
  white-space: nowrap;
}

.group .last {
  margin-bottom: 18px;
}

.group-body {
  padding: 0 10px;
}

.group-body + ul {
  margin-top: 18px;
}

.group-body p {
  height: 18px;
  white-space: nowrap;
}

.group-body a {
  color: #000;
}

.check {
  display: flex;
  align-items: center;
  gap: 4px;
  height: 22px;
  margin-bottom: 2px;
}

.check input {
  width: 14px;
  height: 14px;
  margin: 0 0 0 3px;
  accent-color: #3f92e2;
}

fieldset {
  height: 60px;
  margin: 0 12px;
  padding: 2px 4px;
  border: 1px solid #bdbdbd;
}

legend {
  padding: 0 2px;
  font-family: "Liberation Sans", Arial, sans-serif;
  font-size: 10px;
  font-weight: bold;
}

fieldset input {
  width: 100%;
  height: 22px;
  border: 1px solid #bdbdbd;
}

/* status bar */
.statusbar {
  display: flex;
  align-items: center;
  justify-content: space-between;
  height: 21px;
  margin-top: 1px;
  padding-left: 5px;
  background: linear-gradient(#e2e3e8, #cfd0d7);
  border-top: 1px solid #999;
  font-family: "Liberation Sans", Arial, sans-serif;
  font-size: 10px;
  font-weight: bold;
  flex: none;
}

.grip {
  width: 12px;
  height: 12px;
  align-self: flex-end;
  fill: #aaa;
}
```
